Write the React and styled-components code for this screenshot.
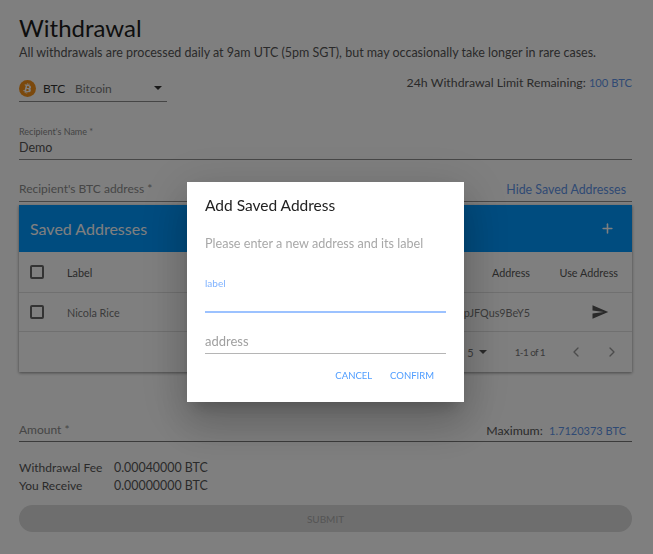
import React from 'react';
import styled, { createGlobalStyle } from 'styled-components';
import { ChevronLeft, ChevronRight, Plus } from 'lucide-react';

const GlobalStyle = createGlobalStyle`
  html, body {
    margin: 0;
    padding: 0;
    background: #fff;
    font-family: Lato, "Open Sans", sans-serif;
    color: #222;
  }
  * {
    box-sizing: border-box;
  }
`;

const Page = styled.div`
  width: 653px;
  height: 554px;
  padding: 14px 21px 0 19px;
  overflow: hidden;
`;

const Title = styled.h1`
  margin: 0;
  height: 28px;
  font-size: 24px;
  line-height: 28px;
  font-weight: 400;
  color: #1c1c1c;
`;

const Subtitle = styled.p`
  margin: 3px 0 0;
  font-size: 12.5px;
  line-height: 16px;
  white-space: nowrap;
  color: #555;
`;

const CurrencyRow = styled.div`
  display: flex;
  justify-content: space-between;
  align-items: flex-start;
  margin-top: 14px;
`;

const CurrencySelect = styled.div`
  display: flex;
  align-items: center;
  width: 148px;
  height: 27px;
  border-bottom: 1px solid #8a8a8a;
  font-size: 12px;
`;

const CoinIcon = styled.svg`
  width: 17px;
  height: 17px;
  margin-right: 7px;
`;

const Ticker = styled.span`
  color: #333;
  width: 32px;
`;

const CoinName = styled.span`
  flex: 1;
  color: #777;
`;

const Caret = styled.span`
  width: 0;
  height: 0;
  margin: ${(p) => p.$margin || '0'};
  border-left: 4px solid transparent;
  border-right: 4px solid transparent;
  border-top: 4px solid ${(p) => p.$color || '#333'};
`;

const Limit = styled.div`
  font-size: 12.3px;
  line-height: 16px;
  color: #555;
`;

const Accent = styled.span`
  font-size: ${(p) => p.$size || 11.2}px;
  color: #5f94e8;
`;

const Field = styled.div`
  position: relative;
  display: flex;
  flex-direction: column;
  justify-content: flex-end;
  height: ${(p) => p.$height}px;
  margin-top: ${(p) => p.$top || 0}px;
  border-bottom: 1px solid #8f8f8f;
`;

const SmallLabel = styled.label`
  font-size: 9px;
  line-height: 12px;
  color: #888;
`;

const FieldValue = styled.div`
  font-size: 12.5px;
  line-height: 18px;
  margin: 1px 0 2px;
  color: #555;
`;

const Placeholder = styled.div`
  font-size: 12px;
  line-height: 18px;
  margin-bottom: ${(p) => p.$lift || 0}px;
  color: #8c8c8c;
`;

const AddressHead = styled.div`
  display: flex;
  justify-content: space-between;
  align-items: flex-end;
  height: 42px;
  padding: 0 6px 2px 0;
  border-bottom: 1px solid #8f8f8f;
`;

const Link = styled.a`
  font-size: 12.4px;
  line-height: 18px;
  color: #5f94e8;
`;

const TableCard = styled.section`
  margin-top: 3px;
  background: #fff;
  box-shadow: 0 1px 3px rgba(0, 0, 0, 0.45);
`;

const Toolbar = styled.div`
  display: flex;
  justify-content: space-between;
  align-items: center;
  height: 47px;
  padding: 0 17px 0 11px;
  background: #0098ff;
  color: #fff;
`;

const ToolbarTitle = styled.h2`
  margin: 0 0 1px;
  font-size: 16px;
  font-weight: 400;
  color: #fff;
`;

const Row = styled.div`
  display: grid;
  grid-template-columns: 37px 1fr 140px 88px;
  align-items: center;
  height: ${(p) => p.$height}px;
  padding: 0 14px 0 11px;
  border-bottom: 1px solid #e0e0e0;
  font-size: 10.8px;
  color: ${(p) => p.$color};
`;

const Checkbox = styled.span`
  display: block;
  width: 14px;
  height: 14px;
  border: 2px solid #666;
  border-radius: 2px;
`;

const AddressCell = styled.span`
  text-align: right;
  white-space: nowrap;
  overflow: hidden;
`;

const ActionCell = styled.span`
  display: flex;
  justify-content: flex-end;
  margin-right: ${(p) => p.$inset || 0}px;
`;

const Pagination = styled.div`
  display: flex;
  justify-content: flex-end;
  align-items: center;
  height: 40px;
  padding-right: 12px;
  font-size: 11px;
  color: #777;
`;

const PageRange = styled.span`
  margin: 0 23px 0 28px;
  font-size: 10px;
  letter-spacing: -0.6px;
`;

const ChevronGroup = styled.span`
  display: flex;
  gap: 20px;
  color: #999;
`;

const AmountField = styled.div`
  display: flex;
  justify-content: space-between;
  align-items: flex-end;
  height: 29px;
  margin-top: 41px;
  padding: 0 6px 2px 0;
  border-bottom: 1px solid #777;
  line-height: 18px;
`;

const Summary = styled.dl`
  display: grid;
  grid-template-columns: 95px 1fr;
  grid-auto-rows: 18px;
  margin: 17px 0 0;
  line-height: 18px;
  color: #555;
`;

const SummaryTerm = styled.dt`
  margin: 0;
  font-size: 12px;
`;

const SummaryValue = styled.dd`
  margin: 0;
  font-size: 12.4px;
`;

const SubmitButton = styled.button`
  display: block;
  width: 100%;
  height: 27px;
  margin-top: 10px;
  border: 0;
  border-radius: 14px;
  background: #dcdcdc;
  font-family: inherit;
  font-size: 10px;
  color: #aaa;
`;

const Backdrop = styled.div`
  position: fixed;
  inset: 0;
  background: rgba(0, 0, 0, 0.5);
`;

const Dialog = styled.div`
  position: fixed;
  left: 187px;
  top: 182px;
  width: 277px;
  height: 220px;
  padding: 14px 18px 0;
  background: #fff;
  box-shadow: 0 11px 15px -7px rgba(0, 0, 0, 0.2), 0 24px 38px 3px rgba(0, 0, 0, 0.14),
    0 9px 46px 8px rgba(0, 0, 0, 0.12);
`;

const DialogTitle = styled.h3`
  margin: 0;
  font-size: 15.5px;
  line-height: 18px;
  font-weight: 400;
  color: #222;
`;

const DialogText = styled.p`
  margin: 22px 0 0;
  font-size: 12.6px;
  line-height: 16px;
  color: #a8a8a8;
`;

const DialogField = styled.div`
  display: flex;
  flex-direction: column;
  justify-content: ${(p) => (p.$focused ? 'flex-start' : 'flex-end')};
  height: ${(p) => p.$height}px;
  margin-top: ${(p) => p.$top}px;
  border-bottom: ${(p) => (p.$focused ? '2px solid #9cc2ff' : '1px solid #b5b5b5')};
`;

const FocusLabel = styled.label`
  font-size: 10px;
  line-height: 12px;
  color: #7fb2ff;
`;

const DialogPlaceholder = styled.div`
  font-size: 13px;
  line-height: 18px;
  margin-bottom: 3px;
  color: #a0a0a0;
`;

const DialogActions = styled.div`
  display: flex;
  justify-content: flex-end;
  gap: 18px;
  margin-top: 14px;
  padding-right: 12px;
`;

const TextButton = styled.button`
  padding: 0;
  border: 0;
  background: none;
  font-family: inherit;
  font-size: 9.5px;
  line-height: 16px;
  color: #4f9dff;
`;

const BitcoinIcon = () => (
  <CoinIcon viewBox="0 0 32 32">
    <circle cx="16" cy="16" r="16" fill="#f7931a" />
    <path
      fill="#fff"
      d="M22.6 14c.3-2.100-1.300-3.200-3.400-4l.7-2.800-1.700-.4-.7 2.700-1.400-.3.7-2.700-1.700-.4-.7 2.800-3.400-.8-.4 1.800s1.200.3 1.200.3c.7.2.8.6.8 1l-1.900 7.700c-.1.200-.3.500-.800.400l-1.200-.3-.8 1.900 3.300.8-.7 2.800 1.700.4.7-2.800 1.400.3-.7 2.800 1.700.4.7-2.800c2.900.500 5.100.3 6-2.300.8-2.100 0-3.300-1.500-4.100 1.100-.3 1.900-1 2.100-2.500zm-3.900 5.400c-.5 2.100-4.100 1-5.200.7l.9-3.700c1.200.3 4.900.9 4.300 3zm.5-5.400c-.5 1.900-3.500.9-4.400.7l.8-3.300c1 .2 4.100.7 3.600 2.600z"
    />
  </CoinIcon>
);

const SendIcon = () => (
  <svg width="18" height="18" viewBox="0 0 24 24" fill="#555">
    <path d="M2.010 21 23 12 2.010 3 2 10l15 2-15 2z" />
  </svg>
);

export default function App() {
  return (
    <>
      <GlobalStyle />
      <Page>
        <Title>Withdrawal</Title>
        <Subtitle>All withdrawals are processed daily at 9am UTC (5pm SGT), but may occasionally take longer in rare cases.</Subtitle>
        <CurrencyRow>
          <CurrencySelect>
            <BitcoinIcon />
            <Ticker>BTC</Ticker>
            <CoinName>Bitcoin</CoinName>
            <Caret $margin="0 5px 0 0" />
          </CurrencySelect>
          <Limit>
            24h Withdrawal Limit Remaining: <Accent>100 BTC</Accent>
          </Limit>
        </CurrencyRow>
        <Field $height={38} $top={20}>
          <SmallLabel>Recipient's Name *</SmallLabel>
          <FieldValue>Demo</FieldValue>
        </Field>
        <AddressHead>
          <Placeholder $lift={1}>Recipient's BTC address *</Placeholder>
          <Link>Hide Saved Addresses</Link>
        </AddressHead>
        <TableCard>
          <Toolbar>
            <ToolbarTitle>Saved Addresses</ToolbarTitle>
            <Plus size={15} strokeWidth={2.5} color="#fff" />
          </Toolbar>
          <Row $height={41} $color="#555">
            <Checkbox />
            <span>Label</span>
            <AddressCell>Address</AddressCell>
            <ActionCell>Use Address</ActionCell>
          </Row>
          <Row $height={39} $color="#777">
            <Checkbox />
            <span>Nicola Rice</span>
            <AddressCell>3KpJFQus9BeY5</AddressCell>
            <ActionCell $inset={9}>
              <SendIcon />
            </ActionCell>
          </Row>
          <Pagination>
            <span>5</span>
            <Caret $margin="0 0 0 5px" $color="#555" />
            <PageRange>1-1 of 1</PageRange>
            <ChevronGroup>
              <ChevronLeft size={16} />
              <ChevronRight size={16} />
            </ChevronGroup>
          </Pagination>
        </TableCard>
        <AmountField>
          <Placeholder>Amount *</Placeholder>
          <Limit>
            Maximum: &nbsp;<Accent $size={11}>1.7120373 BTC</Accent>
          </Limit>
        </AmountField>
        <Summary>
          <SummaryTerm>Withdrawal Fee</SummaryTerm>
          <SummaryValue>0.00040000 BTC</SummaryValue>
          <SummaryTerm>You Receive</SummaryTerm>
          <SummaryValue>0.00000000 BTC</SummaryValue>
        </Summary>
        <SubmitButton disabled>SUBMIT</SubmitButton>
      </Page>
      <Backdrop />
      <Dialog>
        <DialogTitle>Add Saved Address</DialogTitle>
        <DialogText>Please enter a new address and its label</DialogText>
        <DialogField $focused $height={36} $top={25}>
          <FocusLabel>label</FocusLabel>
        </DialogField>
        <DialogField $height={41} $top={0}>
          <DialogPlaceholder>address</DialogPlaceholder>
        </DialogField>
        <DialogActions>
          <TextButton>CANCEL</TextButton>
          <TextButton>CONFIRM</TextButton>
        </DialogActions>
      </Dialog>
    </>
  );
}
